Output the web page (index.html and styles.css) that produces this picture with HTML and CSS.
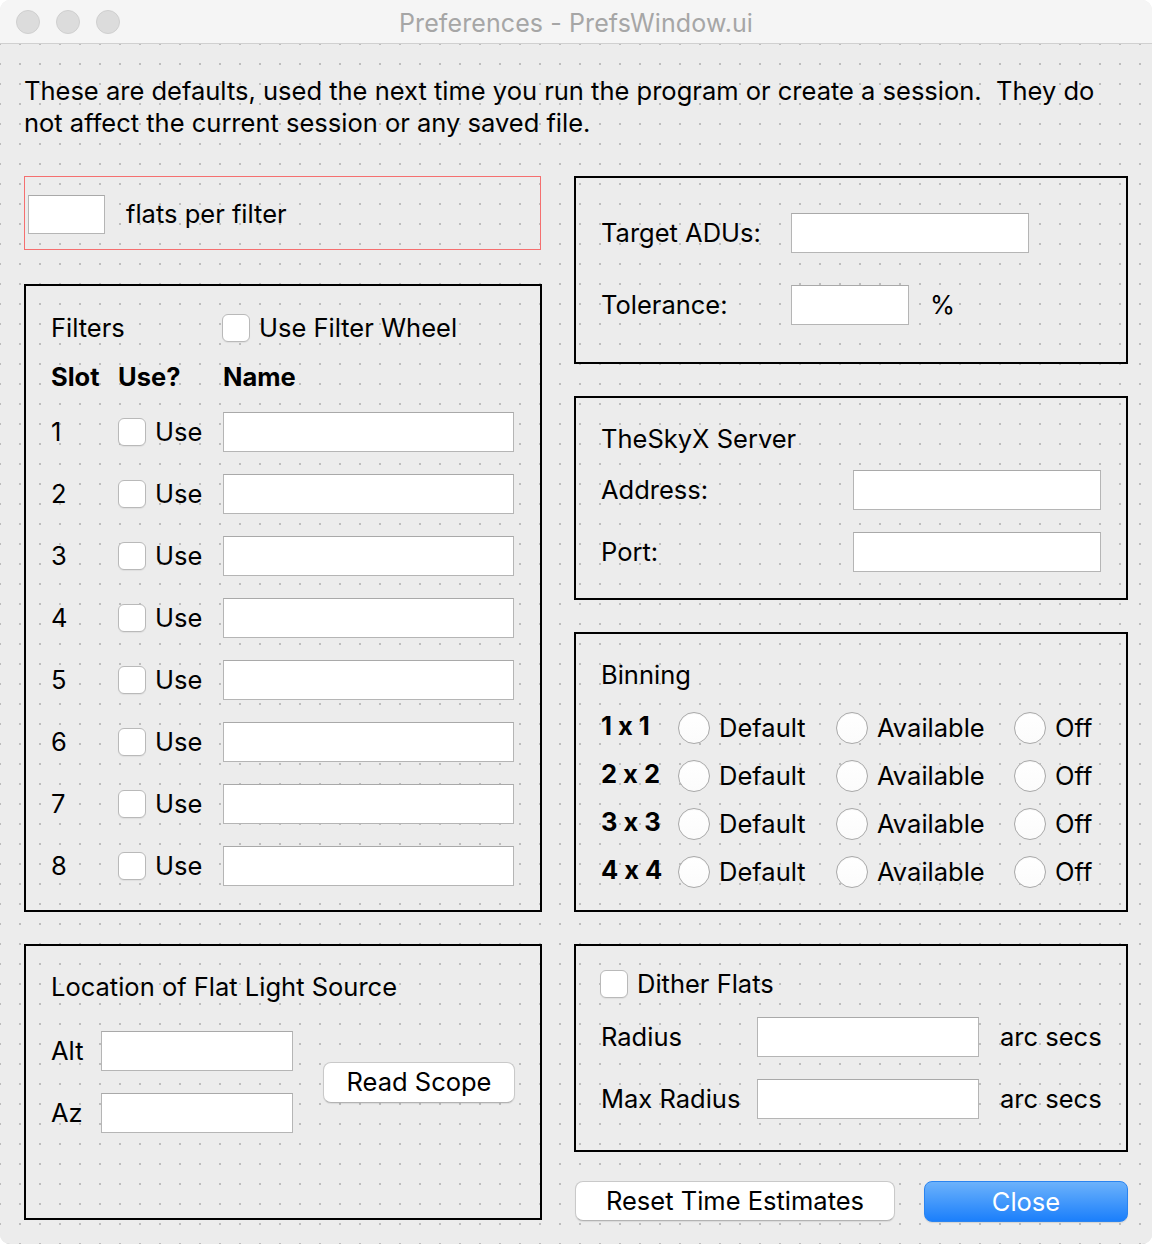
FILE: index.html
```html
<!DOCTYPE html>
<html>
<head>
<meta charset="utf-8">
<title>Preferences - PrefsWindow.ui</title>
<link rel="stylesheet" href="styles.css">
</head>
<body>
<div class="window">
  <div class="titlebar">
    <div class="lights"><span></span><span></span><span></span></div>
    <div class="title">Preferences - PrefsWindow.ui</div>
  </div>
  <div class="content">
    <p class="intro">These are defaults, used the next time you run the program or create a session.&nbsp; They do<br>not affect the current session or any saved file.</p>
    <div class="columns">
      <div class="col col-left">
        <div class="flats-box">
          <div class="input input-flats"></div>
          <span class="label">flats per filter</span>
        </div>

        <div class="box filters">
          <div class="fgrid">
            <div class="label span2">Filters</div>
            <div class="check-item wheel"><span class="checkbox"></span><span class="label">Use Filter Wheel</span></div>
            <div class="label bold">Slot</div>
            <div class="label bold">Use?</div>
            <div class="label bold">Name</div>

            <div class="label">1</div>
            <div class="check-item"><span class="checkbox"></span><span class="label">Use</span></div>
            <div class="input input-name"></div>
            <div class="label">2</div>
            <div class="check-item"><span class="checkbox"></span><span class="label">Use</span></div>
            <div class="input input-name"></div>
            <div class="label">3</div>
            <div class="check-item"><span class="checkbox"></span><span class="label">Use</span></div>
            <div class="input input-name"></div>
            <div class="label">4</div>
            <div class="check-item"><span class="checkbox"></span><span class="label">Use</span></div>
            <div class="input input-name"></div>
            <div class="label">5</div>
            <div class="check-item"><span class="checkbox"></span><span class="label">Use</span></div>
            <div class="input input-name"></div>
            <div class="label">6</div>
            <div class="check-item"><span class="checkbox"></span><span class="label">Use</span></div>
            <div class="input input-name"></div>
            <div class="label">7</div>
            <div class="check-item"><span class="checkbox"></span><span class="label">Use</span></div>
            <div class="input input-name"></div>
            <div class="label">8</div>
            <div class="check-item"><span class="checkbox"></span><span class="label">Use</span></div>
            <div class="input input-name"></div>
          </div>
        </div>

        <div class="box location">
          <div class="box-title label">Location of Flat Light Source</div>
          <div class="loc-body">
            <div class="loc-grid">
              <div class="label">Alt</div>
              <div class="input input-loc"></div>
              <div class="label">Az</div>
              <div class="input input-loc"></div>
            </div>
            <div class="button btn-scope">Read Scope</div>
          </div>
        </div>
      </div>

      <div class="col col-right">
        <div class="box adu">
          <div class="adu-grid">
            <div class="label">Target ADUs:</div>
            <div class="input input-adu"></div>
            <div></div>
            <div class="label">Tolerance:</div>
            <div class="input input-tol"></div>
            <div class="label pct">%</div>
          </div>
        </div>

        <div class="box server">
          <div class="box-title label">TheSkyX Server</div>
          <div class="server-grid">
            <div class="label">Address:</div>
            <div class="input input-server"></div>
            <div class="label">Port:</div>
            <div class="input input-server"></div>
          </div>
        </div>

        <div class="box binning">
          <div class="box-title label">Binning</div>
          <div class="bin-grid">
            <div class="label bold">1 x 1</div>
            <div class="radio-item"><span class="radio"></span><span class="label">Default</span></div>
            <div class="radio-item"><span class="radio"></span><span class="label">Available</span></div>
            <div class="radio-item"><span class="radio"></span><span class="label">Off</span></div>
            <div class="label bold">2 x 2</div>
            <div class="radio-item"><span class="radio"></span><span class="label">Default</span></div>
            <div class="radio-item"><span class="radio"></span><span class="label">Available</span></div>
            <div class="radio-item"><span class="radio"></span><span class="label">Off</span></div>
            <div class="label bold">3 x 3</div>
            <div class="radio-item"><span class="radio"></span><span class="label">Default</span></div>
            <div class="radio-item"><span class="radio"></span><span class="label">Available</span></div>
            <div class="radio-item"><span class="radio"></span><span class="label">Off</span></div>
            <div class="label bold">4 x 4</div>
            <div class="radio-item"><span class="radio"></span><span class="label">Default</span></div>
            <div class="radio-item"><span class="radio"></span><span class="label">Available</span></div>
            <div class="radio-item"><span class="radio"></span><span class="label">Off</span></div>
          </div>
        </div>

        <div class="box dither">
          <div class="check-item dither-check"><span class="checkbox"></span><span class="label">Dither Flats</span></div>
          <div class="dither-grid">
            <div class="label">Radius</div>
            <div class="input input-dither"></div>
            <div class="label">arc secs</div>
            <div class="label">Max Radius</div>
            <div class="input input-dither"></div>
            <div class="label">arc secs</div>
          </div>
        </div>

        <div class="buttons">
          <div class="button btn-reset">Reset Time Estimates</div>
          <div class="button btn-close">Close</div>
        </div>
      </div>
    </div>
  </div>
</div>
</body>
</html>
```

FILE: styles.css
```css
html, body {
  margin: 0;
  padding: 0;
  background: #ffffff;
}

body {
  font-family: Inter, "Noto Sans", "Liberation Sans", sans-serif;
  font-feature-settings: "calt" 0;
  color: #000;
}

.window {
  width: 1152px;
  height: 1244px;
  border-radius: 10px;
  overflow: hidden;
  background: #ececec;
  display: flex;
  flex-direction: column;
}

.titlebar {
  height: 43px;
  flex: none;
  background: #f5f5f5;
  border-bottom: 1px solid #d0d0d0;
  position: relative;
  display: flex;
  align-items: center;
  justify-content: center;
}

.lights {
  position: absolute;
  left: 16px;
  top: 10px;
  display: flex;
  gap: 16px;
}

.lights span {
  width: 22px;
  height: 22px;
  border-radius: 50%;
  background: #dcdcdc;
  border: 1px solid #cfcfcf;
}

.title {
  font-size: 25px;
  color: #a6a6a6;
  letter-spacing: 0.1px;
  margin-top: 2px;
}

.content {
  flex: 1;
  background-color: #ececec;
  background-image:
    linear-gradient(to right, #ececec 18px, transparent 18px),
    linear-gradient(to bottom, #ececec 18px, #bdbdbd 18px);
  background-size: 20px 20px;
  background-position: 1px 1px;
  padding: 0 24px;
}

.intro {
  margin: 31px 0 0 0;
  font-size: 25.5px;
  line-height: 32px;
}

.columns {
  display: flex;
  gap: 32px;
  margin-top: 37px;
}

.col {
  display: flex;
  flex-direction: column;
}

.col-left {
  width: 518px;
}

.col-right {
  width: 554px;
}

.label {
  font-size: 25.5px;
  line-height: 32px;
  white-space: nowrap;
}

.bold {
  font-weight: 700;
}

.input {
  background: #fff;
  border: 1px solid #b5b5b5;
  border-top-color: #a9a9a9;
  box-sizing: border-box;
  height: 40px;
}

.checkbox {
  display: inline-block;
  width: 28px;
  height: 28px;
  box-sizing: border-box;
  border: 1px solid #b9b9b9;
  border-radius: 6px;
  background: #fff;
  box-shadow: 0 1px 1px rgba(0,0,0,0.06);
  flex: none;
}

.check-item {
  display: flex;
  align-items: center;
  gap: 9px;
}

.radio-item {
  display: flex;
  align-items: center;
  gap: 9px;
}

.radio {
  display: inline-block;
  width: 32px;
  height: 32px;
  box-sizing: border-box;
  border-radius: 50%;
  border: 1px solid #a9a9a9;
  background: linear-gradient(#ffffff, #fbfbfb);
  box-shadow: inset 0 1px 1px rgba(0,0,0,0.04);
  flex: none;
}

.box {
  border: 2px solid #000;
  box-sizing: border-box;
}

/* flats box */
.flats-box {
  width: 517px;
  height: 74px;
  box-sizing: border-box;
  border: 1px solid #f56f6f;
  display: flex;
  align-items: center;
  gap: 21px;
  padding-left: 3px;
  padding-top: 2px;
}

.input-flats {
  width: 77px;
  height: 39px;
}

/* filters */
.filters {
  margin-top: 34px;
  padding: 16px 25px 13px 25px;
}

.fgrid {
  display: grid;
  grid-template-columns: 67px 105px 291px;
  grid-template-rows: 51px 48px repeat(8, 62px);
  align-items: center;
}

.span2 {
  grid-column: span 2;
}

.wheel {
  margin-left: -1px;
}

.input-name {
  width: 291px;
}

/* location */
.location {
  margin-top: 32px;
  height: 276px;
  padding: 16px 25px 0 25px;
}

.box-title {
  height: 50px;
  display: flex;
  align-items: center;
}

.loc-body {
  display: flex;
  align-items: center;
  margin-top: 19px;
  gap: 30px;
}

.loc-grid {
  display: grid;
  grid-template-columns: 50px 192px;
  row-gap: 22px;
  align-items: center;
}

.input-loc {
  width: 192px;
}

.button {
  box-sizing: border-box;
  background: #fff;
  border: 1px solid #c9c9c9;
  border-bottom-color: #b3b3b3;
  border-radius: 8px;
  box-shadow: 0 1px 1px rgba(0,0,0,0.08);
  font-size: 25.5px;
  line-height: 32px;
  display: flex;
  align-items: center;
  justify-content: center;
  white-space: nowrap;
}

.btn-scope {
  width: 192px;
  height: 41px;
}

/* right column */
.adu {
  height: 188px;
  padding: 35px 25px 0 25px;
}

.adu-grid {
  display: grid;
  grid-template-columns: 190px 118px auto;
  grid-template-rows: 40px 40px;
  row-gap: 32px;
  align-items: center;
}

.input-adu {
  width: 238px;
}

.input-tol {
  width: 118px;
}

.pct {
  margin-left: 21px;
}

.server {
  margin-top: 32px;
  height: 204px;
  padding: 16px 25px 0 25px;
}

.server .box-title {
  height: 50px;
}

.server-grid {
  display: grid;
  grid-template-columns: 252px 248px;
  grid-template-rows: 40px 40px;
  row-gap: 22px;
  margin-top: 6px;
  align-items: center;
}

.input-server {
  width: 248px;
}

.binning {
  margin-top: 32px;
  height: 280px;
  padding: 16px 25px 0 25px;
}

.bin-grid {
  display: grid;
  grid-template-columns: 77px 158px 178px auto;
  grid-template-rows: repeat(4, 48px);
  margin-top: 4px;
  align-items: center;
}

.bin-grid .bold {
  margin-top: -4px;
}

.dither {
  margin-top: 32px;
  height: 208px;
  padding: 18px 25px 0 24px;
}

.dither-check {
  height: 40px;
}

.dither-grid {
  display: grid;
  grid-template-columns: 156px 222px auto;
  grid-template-rows: 40px 40px;
  row-gap: 22px;
  column-gap: 0;
  margin-top: 13px;
  margin-left: 1px;
  align-items: center;
}

.input-dither {
  width: 222px;
}

.dither-grid .input + .label {
  margin-left: 21px;
}

.buttons {
  display: flex;
  gap: 29px;
  margin-top: 29px;
  padding-left: 1px;
}

.btn-reset {
  width: 320px;
  height: 40px;
}

.btn-close {
  width: 204px;
  height: 41px;
  color: #fff;
  border: 1px solid #2a84f0;
  background: linear-gradient(#6cb2fb, #1b7ffb);
  box-shadow: 0 1px 1px rgba(0,0,0,0.1);
}
```
